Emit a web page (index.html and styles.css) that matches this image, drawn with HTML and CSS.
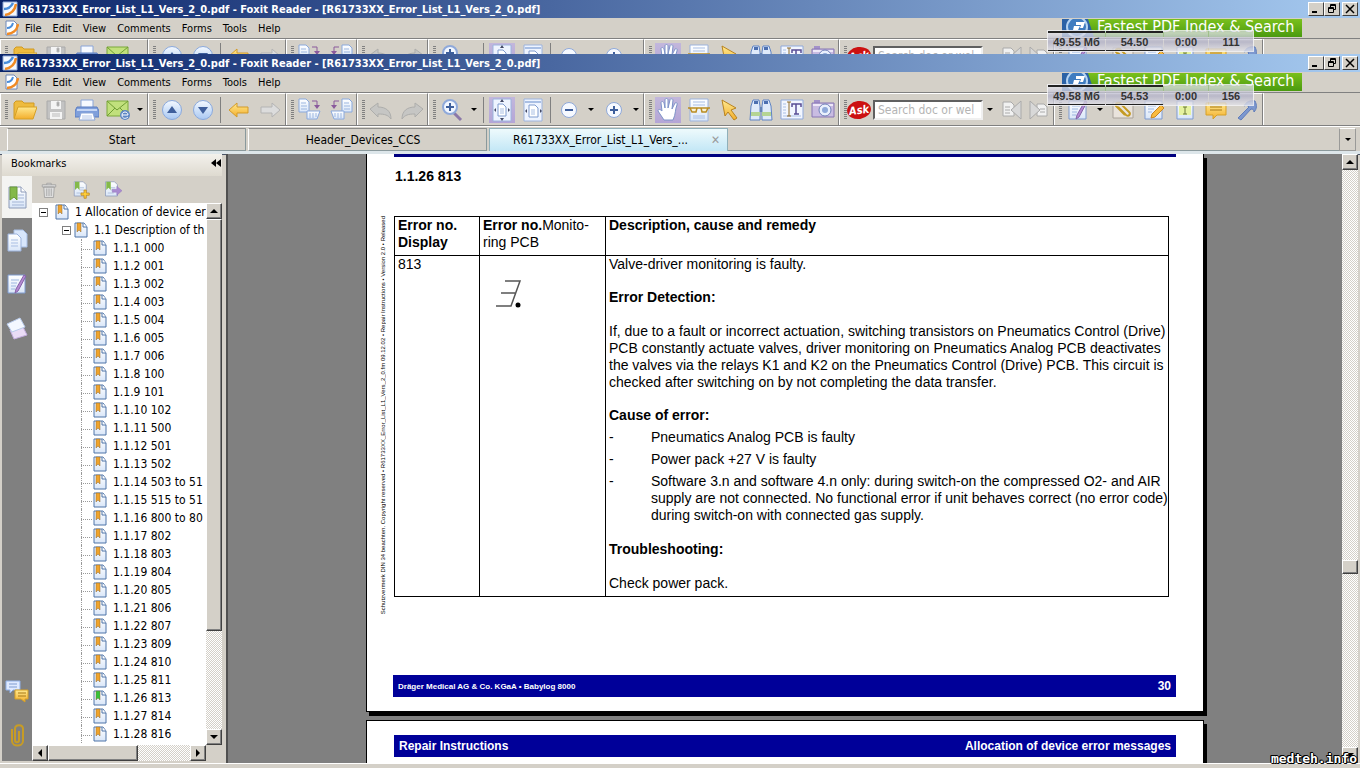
FILE: index.html
```html
<!DOCTYPE html>
<html lang="en">
<head>
    <meta charset="UTF-8">
    <meta name="viewport" content="width=device-width, initial-scale=1.0">
    <link rel="stylesheet" href="styles.css">
    <title>R61733XX_Error_List_L1_Vers_2_0.pdf - Foxit Reader</title>
</head>
<body>
    <svg class="sprites" aria-hidden="true">
        <defs>
            <linearGradient id="gold" x1="0" y1="0" x2="0" y2="1"><stop offset="0" stop-color="#ffe98f"/><stop offset="1" stop-color="#f3ae2c"/></linearGradient>
            <linearGradient id="blue" x1="0" y1="0" x2="0" y2="1"><stop offset="0" stop-color="#f4f9ff"/><stop offset="1" stop-color="#a9c8f2"/></linearGradient>
            <linearGradient id="paper" x1="0" y1="0" x2="0" y2="1"><stop offset="0" stop-color="#ffffff"/><stop offset="1" stop-color="#d9e6f8"/></linearGradient>
        </defs>
        <symbol id="logo" viewBox="0 0 16 16">
            <path d="M1 1h14v14H1z" fill="#f4f8ff" stroke="#8fa9d8"/>
            <path d="M2 8C6 8 9 6 11 2" fill="none" stroke="#4a8edb" stroke-width="2.5"/>
            <path d="M3 14C9 13 13 9 14 3" fill="none" stroke="#f08a24" stroke-width="2.5"/>
        </symbol>
        <symbol id="doclogo" viewBox="0 0 16 16">
            <path d="M3 1h8l3 3v11H3z" fill="#fff" stroke="#6f88b8"/>
            <path d="M4 8c3 0 5-1 6-5" fill="none" stroke="#4a8edb" stroke-width="2"/>
            <path d="M4 14c5 0 10-3 11-10" fill="none" stroke="#f08a24" stroke-width="2.5"/>
        </symbol>
        <symbol id="open" viewBox="0 0 24 24">
            <path d="M1 20V5l2-2h6l2 2h10v5" fill="#eebb3e" stroke="#d09a22"/>
            <path d="M1 21L5 9h19l-4 12z" fill="url(#gold)" stroke="#d6a026"/>
        </symbol>
        <symbol id="save" viewBox="0 0 24 24">
            <path d="M3 3h18v18H3z" fill="#c3c3c3" stroke="#aaa"/>
            <path d="M7 3h10v8H7zM6 14h12v7H6z" fill="#f4f4f4"/>
            <path d="M13 4h2v4h-2zM8 16h8M8 18h8" fill="#999" stroke="#bbb"/>
        </symbol>
        <symbol id="print" viewBox="0 0 24 24">
            <path d="M6 10V2h12v8" fill="#f6f9ff" stroke="#8aa5d8"/>
            <path d="M2 9h20l2 4v6H0v-6z" fill="#7f9fdb" stroke="#5b7cc0"/>
            <path d="M2 12h20" stroke="#c5d6f5" stroke-width="2"/>
            <path d="M6 15h12l2 7H4z" fill="#fff" stroke="#8aa5d8"/>
            <path d="M7 18h10M7 20h10" stroke="#b5c7e8"/>
        </symbol>
        <symbol id="mail" viewBox="0 0 24 24">
            <path d="M1 3h21v15H1z" fill="#c1e07c" stroke="#7aa83a"/>
            <path d="M1 3l10 9L22 3M1 18l8-8M22 18l-8-8" fill="none" stroke="#6f9c33"/>
            <circle cx="19" cy="17" r="5" fill="#5c86c4"/>
            <path d="M16 17h6c0-4-6-4-6 0s4 4 6 2" fill="none" stroke="#fff"/>
        </symbol>
        <symbol id="up" viewBox="0 0 24 24">
            <circle cx="12" cy="12" r="9.5" fill="url(#blue)" stroke="#8aa9dd"/>
            <path d="M12 8l5 7H7z" fill="#3f5f9c"/>
        </symbol>
        <symbol id="down" viewBox="0 0 24 24">
            <circle cx="12" cy="12" r="9.5" fill="url(#blue)" stroke="#8aa9dd"/>
            <path d="M12 16l5-7H7z" fill="#3f5f9c"/>
        </symbol>
        <symbol id="back" viewBox="0 0 24 24">
            <path d="M2 12l8-7v4h11v6H10v4z" fill="url(#gold)" stroke="#d39b2a"/>
        </symbol>
        <symbol id="forward" viewBox="0 0 24 24">
            <path d="M22 12l-8-7v4H3v6h11v4z" fill="#dcdcdc" stroke="#b4b4b4"/>
        </symbol>
        <symbol id="rotr" viewBox="0 0 24 24">
            <path d="M1 1h7l3 3v10H1z" fill="url(#paper)" stroke="#8aa9dd"/>
            <path d="M3 5h5M3 8h6M3 11h6" stroke="#9db7e0"/>
            <path d="M9 13h13l-3 8H9z" fill="url(#paper)" stroke="#8aa9dd"/>
            <path d="M12 15v5M15 15v5M18 15v4" stroke="#9db7e0"/>
            <path d="M14 3h5v6" fill="none" stroke="#8a5a9c"/><path d="M16 7l3 4 3-4z" fill="#8a5a9c"/>
        </symbol>
        <symbol id="rotl" viewBox="0 0 24 24">
            <path d="M13 1h7l3 3v10H13z" fill="url(#paper)" stroke="#8aa9dd"/>
            <path d="M15 5h5M15 8h6M15 11h6" stroke="#9db7e0"/>
            <path d="M2 13h13v8H5z" fill="url(#paper)" stroke="#8aa9dd"/>
            <path d="M6 15v4M9 15v5M12 15v5" stroke="#9db7e0"/>
            <path d="M10 3H5v6" fill="none" stroke="#8a5a9c"/><path d="M8 7l-3 4-3-4z" fill="#8a5a9c"/>
        </symbol>
        <symbol id="undo" viewBox="0 0 24 24">
            <path d="M1 11l8-6v4c8 0 13 4 13 12-3-4-6-5-13-5v3z" fill="#c6c6c4" stroke="#adadab"/>
        </symbol>
        <symbol id="redo" viewBox="0 0 24 24">
            <path d="M23 11l-8-6v4C7 9 2 13 2 21c3-4 6-5 13-5v3z" fill="#c6c6c4" stroke="#adadab"/>
        </symbol>
        <symbol id="zoomin" viewBox="0 0 24 24">
            <path d="M14 15l7 7" stroke="#8b78a8" stroke-width="3"/>
            <circle cx="10" cy="9" r="7" fill="#f1f6ff" stroke="#8fa9da" stroke-width="2"/>
            <path d="M10 5v8M6 9h8" stroke="#3e5f9c" stroke-width="2"/>
        </symbol>
        <symbol id="fitpage" viewBox="0 0 24 24">
            <path d="M3 1h18v22H3z" fill="#eef4ff" stroke="#9cb3dd"/>
            <path d="M8 6h5l3 3v9H8z" fill="#fff" stroke="#7f9bcf"/>
            <path d="M12 1l2 3h-4zM12 23l2-3h-4zM4 12l2-2v4zM20 12l-2-2v4z" fill="#444a66"/>
            <path d="M10 11h4M10 13h4M10 15h4" stroke="#a9bfe4"/>
        </symbol>
        <symbol id="fitwidth" viewBox="0 0 24 24">
            <path d="M3 1h18v22H3z" fill="#eef4ff" stroke="#9cb3dd"/>
            <path d="M4 4h16" stroke="#a9bfe4" stroke-width="2"/>
            <path d="M8 7h6l3 3v9H8z" fill="#fff" stroke="#7f9bcf"/>
            <path d="M4 13l2-2v4zM21 13l-2-2v4z" fill="#444a66"/>
            <path d="M10 12h4M10 14h4M10 16h4" stroke="#a9bfe4"/>
        </symbol>
        <symbol id="minus" viewBox="0 0 24 24">
            <circle cx="12" cy="12" r="7.5" fill="#f6f9ff" stroke="#8fa9da"/>
            <path d="M8 12h8" stroke="#3e5f9c" stroke-width="2"/>
        </symbol>
        <symbol id="plus" viewBox="0 0 24 24">
            <circle cx="12" cy="12" r="7.5" fill="#f6f9ff" stroke="#8fa9da"/>
            <path d="M8 12h8M12 8v8" stroke="#3e5f9c" stroke-width="2"/>
        </symbol>
        <symbol id="hand" viewBox="0 0 24 24">
            <path d="M8 22L2 13c0-2 2-2 4 0L5 5c0-2 2-2 3 0l1 5V2c0-2 3-2 3 0v8l2-8c0-2 3-1 3 0l-1 9 3-6c1-1 3 0 2 2-2 4-1 9-4 15z" fill="#fff" stroke="#7d93c8"/>
        </symbol>
        <symbol id="glasses" viewBox="0 0 24 24">
            <path d="M3 1h18v22H3z" fill="url(#paper)" stroke="#9cb3dd"/>
            <path d="M6 4h12M6 7h12M6 18h12M6 20h12" stroke="#a9bfe4"/>
            <path d="M1 10h22M3 10h7l-1 4H5zM14 10h7l-2 4h-4z" fill="#f8f2d8" stroke="#b98c22" stroke-width="1.5"/>
        </symbol>
        <symbol id="cursor" viewBox="0 0 24 24">
            <path d="M4 2l14 8-5 2 6 8-3 2-6-8-3 4z" fill="url(#gold)" stroke="#b88320"/>
        </symbol>
        <symbol id="find" viewBox="0 0 24 24">
            <path d="M4 2h6l1 6v14H1l1-14zM14 2h6l2 6 1 14H13V8z" fill="#dfeafa" stroke="#5e83c4"/>
            <path d="M5 3h4v3H5zM15 3h4v3h-4z" fill="#4c6fb0"/>
            <path d="M2 14h9v4H2zM13 14h9v4h-9z" fill="#b5d494"/>
            <path d="M11 9h2v5h-2z" fill="#6583b4"/>
        </symbol>
        <symbol id="text" viewBox="0 0 24 24">
            <path d="M1 2h22v19H1z" fill="#f2f6ff" stroke="#8fa9da"/>
            <path d="M3 6h3M3 9h3M3 12h3M3 15h3M3 18h18" stroke="#a9bfe4"/>
            <path d="M9 4v14M7 4h4M7 18h4" stroke="#8d6b28"/>
            <path d="M12 9V6h9v3M16 6v10M14 16h5" fill="none" stroke="#584d95" stroke-width="1.5"/>
        </symbol>
        <symbol id="camera" viewBox="0 0 24 24">
            <path d="M3 2h6v4H3z" fill="#a391c9"/>
            <path d="M1 5h22v14H1z" fill="#c9bce2" stroke="#8876b4"/>
            <path d="M2 7h20" stroke="#eee8f8" stroke-width="2"/>
            <circle cx="14" cy="12" r="6" fill="#e9f0fc" stroke="#7281b8"/>
            <circle cx="14" cy="12" r="3" fill="#8fa9da"/>
        </symbol>
        <symbol id="prevfind" viewBox="0 0 24 24">
            <path d="M4 4h8l3 3v11H4z" fill="#f1f1f1" stroke="#aaa"/>
            <path d="M6 9h5M6 12h5M6 15h5" stroke="#aaa"/>
            <path d="M22 3v18L12 12z" fill="#d8d8d8" stroke="#aaa"/>
        </symbol>
        <symbol id="nextfind" viewBox="0 0 24 24">
            <path d="M10 6h7l3 3v9H10z" fill="#f1f1f1" stroke="#aaa"/>
            <path d="M13 11h5M13 14h5" stroke="#aaa"/>
            <path d="M3 3v18l10-9z" fill="#d8d8d8" stroke="#aaa"/>
        </symbol>
        <symbol id="note" viewBox="0 0 24 24">
            <path d="M3 3h17v18H3z" fill="url(#paper)" stroke="#7f9bcf"/>
            <path d="M6 8h8M6 11h6M6 14h5M6 17h4" stroke="#9db7e0"/>
            <path d="M21 4L13 19l-3 2 1-4 8-14z" fill="#b48ad2" stroke="#8462a8"/>
        </symbol>
        <symbol id="attach" viewBox="0 0 24 24">
            <path d="M2 4h20v16H2z" fill="#e9e3dc" stroke="#a9a29a"/>
            <path d="M7 9l8 8c3 2 5-1 3-3L9 5C6 4 4 6 5 8l9 9" fill="none" stroke="#c49a22" stroke-width="2"/>
        </symbol>
        <symbol id="edit" viewBox="0 0 24 24">
            <path d="M3 3h17v18H3z" fill="url(#paper)" stroke="#7f9bcf"/>
            <path d="M6 8h8M6 11h6M6 14h4" stroke="#9db7e0"/>
            <path d="M19 7l3 3-9 9-4 1 1-4z" fill="#f9bb3f" stroke="#c98520"/>
        </symbol>
        <symbol id="type" viewBox="0 0 24 24">
            <path d="M4 3h16v18H4z" fill="url(#paper)" stroke="#7f9bcf"/>
            <path d="M6 8h12v9H6z" fill="#e6f3a0"/>
            <path d="M10 9h4M12 9v7M10 16h4" stroke="#6b7a3a"/>
        </symbol>
        <symbol id="comment" viewBox="0 0 24 24">
            <path d="M2 5h20v12h-9l-4 4v-4H2z" fill="url(#gold)" stroke="#d6a026"/>
            <path d="M6 9h12M6 12h12" stroke="#a87a18"/>
        </symbol>
        <symbol id="arrow" viewBox="0 0 24 24">
            <path d="M3 20L14 9c-2-2-3-2-5-1 2-4 6-6 11-5 2 4 2 8-1 11 0-2-1-3-3-3L6 22z" fill="#7d98cf" stroke="#5f7cba"/>
        </symbol>
        <symbol id="bm" viewBox="0 0 14 16">
            <path d="M1 1h9l3 4v10H1z" fill="url(#paper)" stroke="#4f74a8"/>
            <path d="M9 1v4h4" fill="#fff" stroke="#4f74a8"/>
            <path d="M3 1h4v9L5 8l-2 2z" fill="currentColor" stroke="#8a6a3a" stroke-width=".5"/>
        </symbol>
        <symbol id="navbm" viewBox="0 0 24 24">
            <path d="M4 2h12l5 5v16H4z" fill="url(#paper)" stroke="#8c9ab8"/>
            <path d="M16 2v5h5" fill="#fff" stroke="#8c9ab8"/>
            <path d="M13 10h6M13 13h6M7 17h12M7 20h12" stroke="#a3b5d6"/>
            <path d="M5 2h7v13l-3-3-4 3z" fill="#84b94a" stroke="#6a9a38"/>
        </symbol>
        <symbol id="pages" viewBox="0 0 24 24">
            <path d="M9 2h9l4 4v13H9z" fill="#d8e6fb" stroke="#a9bfe4"/>
            <path d="M3 6h9l4 4v13H3z" fill="url(#paper)" stroke="#9cb3dd"/>
            <path d="M6 12h7M6 15h7M6 18h7" stroke="#a9bfe4"/>
        </symbol>
        <symbol id="layers" viewBox="0 0 24 24">
            <path d="M5 14l13-3 4 8-13 4z" fill="#eadcf6" stroke="#c5aee0"/>
            <path d="M2 8l13-6 5 9-13 5z" fill="#f4f8ff" stroke="#b9cbea"/>
        </symbol>
        <symbol id="clip" viewBox="0 0 24 24">
            <path d="M14 8v9c0 3-4 3-4 0V6c0-5 8-5 8 0v12c0 6-11 6-11 0V6" fill="none" stroke="#c79c25" stroke-width="2"/>
        </symbol>
        <symbol id="talk" viewBox="0 0 24 24">
            <path d="M1 2h14v9H8l-3 3v-3H1z" fill="#dfeaff" stroke="#8fb0e8"/>
            <path d="M4 5h8M4 8h8" stroke="#7f9bcf"/>
            <path d="M10 11h13v9h-3v3l-4-3h-6z" fill="url(#gold)" stroke="#d6a026"/>
            <path d="M13 14h8M13 17h8" stroke="#a87a18"/>
        </symbol>
        <symbol id="trash" viewBox="0 0 24 24">
            <path d="M5 8h14l-1 14H6zM3 5h18v3H3zM9 5V3h6v2" fill="#dedede" stroke="#999"/>
            <path d="M9 10v10M12 10v10M15 10v10" stroke="#999"/>
        </symbol>
        <symbol id="addbm" viewBox="0 0 24 24">
            <path d="M3 1h12l4 4v15H3z" fill="url(#paper)" stroke="#8c9ab8"/>
            <path d="M10 9h6M10 12h6M6 16h8" stroke="#a3b5d6"/>
            <path d="M4 1h6v11l-3-3-3 3z" fill="#84b94a"/>
            <path d="M16 12h3v4h4v3h-4v4h-3v-4h-4v-3h4z" fill="#ffcf3a" stroke="#b88320"/>
        </symbol>
        <symbol id="gobm" viewBox="0 0 24 24">
            <path d="M2 1h12l4 4v15H2z" fill="url(#paper)" stroke="#8c9ab8"/>
            <path d="M9 9h6M9 12h3M5 16h8" stroke="#a3b5d6"/>
            <path d="M3 1h6v11L6 9l-3 3z" fill="#84b94a"/>
            <path d="M11 11h6V7l7 6-7 6v-4h-6z" fill="#a98bd0" stroke="#8a6cb4" stroke-width=".5"/>
        </symbol>
    </svg>

    <div class="window">
        <header class="window-head" id="head">
            <div class="titlebar">
                <svg class="ico16"><use href="#logo"/></svg>
                <span class="title">R61733XX_Error_List_L1_Vers_2_0.pdf - Foxit Reader - [R61733XX_Error_List_L1_Vers_2_0.pdf]</span>
                <button class="winbtn" aria-label="Minimize"><svg viewBox="0 0 12 10"><path d="M2 8h5" stroke="#000" stroke-width="2"/></svg></button>
                <button class="winbtn" aria-label="Restore"><svg viewBox="0 0 12 10"><path d="M4.500 3V.5h5v5H8M4.500 1.500h5M2.500 3.500h5v5h-5zM2.500 4.500h5" fill="none" stroke="#000"/></svg></button>
                <button class="winbtn" aria-label="Close"><svg viewBox="0 0 12 10"><path d="M2 1l8 8M10 1L2 9" stroke="#000" stroke-width="1.5"/></svg></button>
            </div>
            <nav class="menubar">
                <svg class="ico16"><use href="#doclogo"/></svg>
                <button>File</button>
                <button>Edit</button>
                <button>View</button>
                <button>Comments</button>
                <button>Forms</button>
                <button>Tools</button>
                <button>Help</button>
                <a class="promo" href="#">
                    <svg viewBox="0 0 32 18"><path d="M0 0h26l6 18H0z" fill="#2b62a6"/><circle cx="15" cy="8" r="10" fill="#3f7cc0" stroke="#b6d4f2" stroke-width="2"/><path d="M14 3h9l-2 6h-3l1-3h-5zM12 7h6l-2 4h-5z" fill="#fff"/></svg>
                    <span>Fastest PDF Index &amp; Search</span>
                </a>
            </nav>
            <div class="toolbar">
                <div class="group">
                    <button class="tool" aria-label="Open"><svg><use href="#open"/></svg></button>
                    <button class="tool" aria-label="Save"><svg><use href="#save"/></svg></button>
                    <button class="tool" aria-label="Print"><svg><use href="#print"/></svg></button>
                    <button class="tool" aria-label="Email"><svg><use href="#mail"/></svg></button>
                    <button class="drop" aria-label="More"></button>
                </div>
                <div class="group">
                    <button class="tool" aria-label="Previous page"><svg><use href="#up"/></svg></button>
                    <button class="tool" aria-label="Next page"><svg><use href="#down"/></svg></button>
                    <i class="sep"></i>
                    <button class="tool" aria-label="Back"><svg><use href="#back"/></svg></button>
                    <button class="tool" aria-label="Forward"><svg><use href="#forward"/></svg></button>
                </div>
                <div class="group">
                    <button class="tool" aria-label="Rotate right"><svg><use href="#rotr"/></svg></button>
                    <button class="tool" aria-label="Rotate left"><svg><use href="#rotl"/></svg></button>
                </div>
                <div class="group">
                    <button class="tool" aria-label="Undo"><svg><use href="#undo"/></svg></button>
                    <button class="tool" aria-label="Redo"><svg><use href="#redo"/></svg></button>
                </div>
                <div class="group">
                    <button class="tool" aria-label="Zoom"><svg><use href="#zoomin"/></svg></button>
                    <button class="drop" aria-label="Zoom options"></button>
                    <i class="sep"></i>
                    <button class="tool active" aria-label="Fit page"><svg><use href="#fitpage"/></svg></button>
                    <button class="tool" aria-label="Fit width"><svg><use href="#fitwidth"/></svg></button>
                    <i class="sep"></i>
                    <button class="tool" aria-label="Zoom out"><svg><use href="#minus"/></svg></button>
                    <button class="drop" aria-label="Zoom out options"></button>
                    <button class="tool" aria-label="Zoom in"><svg><use href="#plus"/></svg></button>
                    <button class="drop" aria-label="Zoom in options"></button>
                </div>
                <div class="group">
                    <button class="tool active" aria-label="Hand"><svg><use href="#hand"/></svg></button>
                    <button class="tool" aria-label="Read mode"><svg><use href="#glasses"/></svg></button>
                    <button class="tool" aria-label="Select annotation"><svg><use href="#cursor"/></svg></button>
                    <button class="tool" aria-label="Find"><svg><use href="#find"/></svg></button>
                    <button class="tool" aria-label="Select text"><svg><use href="#text"/></svg></button>
                    <button class="tool" aria-label="Snapshot"><svg><use href="#camera"/></svg></button>
                </div>
                <div class="group">
                    <button class="ask">Ask</button>
                    <input class="search" type="text" placeholder="Search doc or wel" aria-label="Search">
                    <button class="drop" aria-label="Search options"></button>
                    <button class="tool narrow" aria-label="Find previous"><svg><use href="#prevfind"/></svg></button>
                    <button class="tool narrow" aria-label="Find next"><svg><use href="#nextfind"/></svg></button>
                </div>
                <div class="group">
                    <button class="tool" aria-label="Note"><svg><use href="#note"/></svg></button>
                    <button class="drop" aria-label="Note options"></button>
                    <button class="tool" aria-label="Attach"><svg><use href="#attach"/></svg></button>
                    <button class="tool" aria-label="Edit"><svg><use href="#edit"/></svg></button>
                    <button class="tool" aria-label="Typewriter"><svg><use href="#type"/></svg></button>
                    <button class="tool" aria-label="Comment"><svg><use href="#comment"/></svg></button>
                    <button class="tool" aria-label="Arrow"><svg><use href="#arrow"/></svg></button>
                </div>
            </div>
            <div class="meter">
                <span class="bar" data-size>49.58 Мб</span>
                <span class="bar" data-rate>54.53</span>
                <span>0:00</span>
                <span data-count>156</span>
            </div>
        </header>

        <div class="tabs">
            <button class="tab">Start</button>
            <button class="tab">Header_Devices_CCS</button>
            <button class="tab current">R61733XX_Error_List_L1_Vers_... <span class="close">✕</span></button>
            <div class="tabfill"></div>
            <button class="tablist" aria-label="List tabs"></button>
        </div>

        <main class="content">
            <aside class="sidebar">
                <div class="side-title"><span>Bookmarks</span><button aria-label="Collapse"><svg viewBox="0 0 10 8"><path d="M5 0v8L0 4zM10 0v8L5 4z"/></svg></button></div>
                <div class="side-body">
                    <div class="strip">
                        <button class="on" aria-label="Bookmarks"><svg><use href="#navbm"/></svg></button>
                        <button aria-label="Pages"><svg><use href="#pages"/></svg></button>
                        <button aria-label="Signatures"><svg><use href="#note"/></svg></button>
                        <button aria-label="Layers"><svg><use href="#layers"/></svg></button>
                        <button class="low" aria-label="Comments"><svg><use href="#talk"/></svg></button>
                        <button aria-label="Attachments"><svg><use href="#clip"/></svg></button>
                    </div>
                    <div class="panel">
                        <div class="panel-tools">
                            <button aria-label="Delete"><svg><use href="#trash"/></svg></button>
                            <button aria-label="Add"><svg><use href="#addbm"/></svg></button>
                            <button aria-label="Go to"><svg><use href="#gobm"/></svg></button>
                        </div>
                        <div class="treebox">
                            <div class="tree" id="tree">
                                <a class="node root" href="#"><i class="fold"></i><svg><use href="#bm"/></svg>1 Allocation of device er</a>
                                <a class="node sub" href="#"><i class="fold"></i><svg><use href="#bm"/></svg>1.1 Description of th</a>
                            </div>
                            <div class="vscroll">
                                <button class="sb up" aria-label="Scroll up"></button>
                                <div class="thumb"></div>
                                <button class="sb down" aria-label="Scroll down"></button>
                            </div>
                        </div>
                        <div class="hscroll">
                            <button class="sb left" aria-label="Scroll left"></button>
                            <div class="thumb"></div>
                            <button class="sb right" aria-label="Scroll right"></button>
                        </div>
                    </div>
                </div>
            </aside>

            <section class="viewer">
                <article class="page first">
                    <div class="rule"></div>
                    <h1>1.1.26 813</h1>
                    <div class="sheet">
                        <p class="copyright">Schutzvermerk DIN 34 beachten. Copyright reserved • R61733XX_Error_List_L1_Vers_2_0.fm 09.12.02 • Repair Instructions • Version 2.0 • Released</p>
                        <table>
                            <tr>
                                <th class="c1">Error no.<br>Display</th>
                                <th class="c2">Error no.<span>Monito-<br>ring PCB</span></th>
                                <th>Description, cause and remedy</th>
                            </tr>
                            <tr>
                                <td>813</td>
                                <td><svg class="segment" viewBox="0 0 28 30"><path d="M10 2h15L16 27H1M6 14h14" fill="none" stroke="#555" stroke-width="1.5"/><circle cx="23" cy="26" r="2.5"/></svg></td>
                                <td>
                                    <p>Valve-driver monitoring is faulty.</p>
                                    <h2>Error Detection:</h2>
                                    <p>If, due to a fault or incorrect actuation, switching transistors on Pneumatics Control (Drive)<br>
                                    PCB constantly actuate valves, driver monitoring on Pneumatics Analog PCB deactivates<br>
                                    the valves via the relays K1 and K2 on the Pneumatics Control (Drive) PCB. This circuit is<br>
                                    checked after switching on by not completing the data transfer.</p>
                                    <h2 class="tight">Cause of error:</h2>
                                    <ul>
                                        <li>Pneumatics Analog PCB is faulty</li>
                                        <li>Power pack +27 V is faulty</li>
                                        <li>Software 3.n and software 4.n only: during switch-on the compressed O2- and AIR<br>
                                        supply are not connected. No functional error if unit behaves correct (no error code)<br>
                                        during switch-on with connected gas supply.</li>
                                    </ul>
                                    <h2>Troubleshooting:</h2>
                                    <p>Check power pack.</p>
                                </td>
                            </tr>
                        </table>
                    </div>
                    <footer><small>Dräger Medical AG &amp; Co. KGaA • Babylog 8000</small><span>30</span></footer>
                </article>
                <article class="page">
                    <div class="band"><span>Repair Instructions</span><span>Allocation of device error messages</span></div>
                </article>
            </section>
            <div class="vscroll main-scroll">
                <button class="sb up" aria-label="Scroll up"></button>
                <div class="thumb"></div>
                <button class="sb down" aria-label="Scroll down"></button>
            </div>
        </main>
        <div class="status"></div>
    </div>
    <div class="watermark">medteh.info</div>

    <script>
        // Bookmarks of section 1.1
        const errors = ['000', '001', '002', '003', '004', '005', '006', '100', '101', '102', '500', '501', '502',
            '503 to 51', '515 to 51', '800 to 80', '802', '803', '804', '805', '806', '807', '809', '810',
            '811', '813', '814', '816'];
        const tree = document.getElementById('tree');
        errors.forEach((code, i) => {
            const link = document.createElement('a');
            link.href = '#';
            link.className = code === '813' ? 'node leaf here' : 'node leaf';
            link.innerHTML = '<svg><use href="#bm"/></svg>1.1.' + (i + 1) + ' ' + code;
            tree.appendChild(link);
        });

        // The window behind shows only the top of its head
        const head = document.getElementById('head');
        const behind = head.cloneNode(true);
        behind.removeAttribute('id');
        behind.classList.add('behind');
        behind.querySelector('[data-size]').textContent = '49.55 Мб';
        behind.querySelector('[data-rate]').textContent = '54.50';
        behind.querySelector('[data-count]').textContent = '111';
        head.before(behind);
    </script>
</body>
</html>
```
FILE: styles.css
```css
* {
    box-sizing: border-box;
}

body {
    margin: 0;
    height: 100vh;
    overflow: hidden;
    background: #d4d0c8;
    color: #000;
    font-family: "DejaVu Sans Condensed", "DejaVu Sans", sans-serif;
    font-size: 11px;
}

button {
    padding: 0;
    border: 0;
    background: none;
    color: inherit;
    font: inherit;
}

a {
    color: inherit;
    text-decoration: none;
}

svg {
    display: block;
    flex: none;
}

.sprites {
    position: absolute;
    width: 0;
    height: 0;
}

.ico16 {
    width: 16px;
    height: 16px;
}

.window {
    display: flex;
    flex-direction: column;
    height: 100vh;
}

/* title, menu and toolbar */
.window-head {
    position: relative;
    flex: none;
}

.window-head.behind {
    height: 54px;
    overflow: hidden;
}

.titlebar {
    display: flex;
    align-items: center;
    height: 18px;
    padding: 0 2px;
    background: linear-gradient(to right, #0a246a, #a6caf0);
    color: #fff;
    font-weight: bold;
}

.title {
    flex: 1;
    padding-left: 2px;
    white-space: nowrap;
}

.winbtn {
    width: 16px;
    height: 14px;
    background: #d4d0c8;
    border: 1px solid;
    border-color: #fff #404040 #404040 #fff;
}

.winbtn:last-child {
    margin-left: 2px;
}

.winbtn svg {
    width: 12px;
    height: 10px;
    margin: auto;
}

.menubar {
    display: flex;
    align-items: center;
    gap: 11px;
    height: 20px;
    padding-left: 3px;
}

.menubar .ico16 {
    margin-right: -5px;
}

.promo {
    display: flex;
    align-items: center;
    width: 240px;
    height: 18px;
    margin: 0 58px 0 auto;
    overflow: hidden;
    background: linear-gradient(#7ac01c, #4a9a10);
    color: #fff;
    font: 16px/16px "DejaVu Sans Condensed", sans-serif;
    white-space: nowrap;
}

.promo span {
    padding-bottom: 2px;
}

.promo svg {
    width: 32px;
    height: 18px;
    margin-right: 3px;
}

.toolbar {
    display: flex;
    height: 34px;
    border-top: 1px solid #808080;
    border-bottom: 1px solid #808080;
}

.group {
    position: relative;
    display: flex;
    align-items: center;
    padding-left: 8px;
    border-top: 1px solid #fff;
    border-left: 1px solid #fff;
    border-right: 1px solid #808080;
}

.group + .group {
    padding-left: 7px;
}

.group:last-child {
    box-shadow: 1px 0 #fff;
}

.group::before {
    content: "";
    position: absolute;
    left: 4px;
    top: 6px;
    width: 3px;
    height: 19px;
    background: repeating-linear-gradient(#808080 0 1px, #d4d0c8 1px 2px);
}

.tool {
    display: flex;
    align-items: center;
    justify-content: center;
    width: 31px;
    height: 28px;
}

.tool.narrow {
    width: 28px;
}

.tool svg {
    width: 24px;
    height: 24px;
}

.tool.active {
    background: linear-gradient(#c2b7dc, #b4a5d6) center / 26px 26px no-repeat;
}

.drop {
    width: 14px;
    height: 24px;
}

.drop::before,
.tablist::before {
    content: "";
    display: block;
    width: 0;
    margin: 0 auto;
    border: 3px solid transparent;
    border-top-color: #000;
    border-bottom: 0;
}

.sep {
    width: 1px;
    height: 26px;
    margin: 0 2px;
    background: #808080;
}

.ask {
    width: 24px;
    height: 18px;
    margin-right: 2px;
    border-radius: 50%;
    background: #cc1111;
    color: #fff;
    font: italic bold 11px "DejaVu Sans Condensed", sans-serif;
    transform: rotate(-8deg);
}

.search {
    width: 110px;
    height: 20px;
    padding: 0 3px;
    border: 2px solid;
    border-color: #606060 #f0f0f0 #f0f0f0 #606060;
    background: #fff;
    font: 12px "DejaVu Sans Condensed", sans-serif;
}

.search::placeholder {
    color: #b4b4b4;
}

.meter {
    position: absolute;
    top: 30px;
    right: 106px;
    display: flex;
    gap: 1px;
    background: rgba(212, 212, 220, 0.6);
    border: 1px solid rgba(255, 255, 255, 0.6);
    color: #333;
    font: bold 11px/18px "Liberation Sans", sans-serif;
    text-align: center;
}

.meter span {
    width: 44px;
    border-top: 2px solid transparent;
    background: linear-gradient(rgba(240, 240, 245, 0.4), rgba(160, 160, 190, 0.5) 50%, rgba(240, 240, 245, 0.4));
}

.meter .bar {
    width: 57px;
    border-top-color: #222;
    box-shadow: inset 0 -1px #222;
}

/* document tabs */
.tabs {
    display: flex;
    flex: none;
    height: 28px;
    padding: 1px 4px 0 7px;
    border-bottom: 3px solid #dde6ea;
    box-shadow: 0 1px #4a5568;
    border-top: 1px solid #fff;
    font-size: 12px;
}

.tab {
    position: relative;
    width: 239px;
    margin-right: 2px;
    padding-right: 9px;
    border: 1px solid #8a999c;
    border-left-color: #fff;
    border-top-color: #8a8a88;
    white-space: nowrap;
}

.tab.current {
    padding-right: 16px;
    border-color: #8fb0ba;
    border-bottom: 0;
    margin-right: 0;
    background: linear-gradient(#eefafc, #c3e7f6);
}

.close {
    position: absolute;
    right: 7px;
    color: #9a9a9a;
}

.tabfill {
    flex: 1;
    border-bottom: 1px solid #8a999c;
}

.tablist {
    width: 17px;
    border: 1px solid #9a9a98;
    border-top-color: #fff;
}

/* bookmarks */
.content {
    display: flex;
    flex: 1;
    min-height: 0;
}

.sidebar {
    display: flex;
    flex-direction: column;
    flex: none;
    width: 228px;
    padding: 0 4px 2px 2px;
    border-right: 2px solid #505050;
}

.side-title {
    display: flex;
    align-items: center;
    justify-content: space-between;
    height: 22px;
    padding: 0 1px 0 9px;
    background: linear-gradient(#f3f1ec, #dedad0);
}

.side-title span {
    padding-bottom: 4px;
}

.side-title svg {
    width: 10px;
    height: 8px;
    margin-bottom: 4px;
}

.side-body {
    display: flex;
    flex: 1;
    min-height: 0;
}

.strip {
    display: flex;
    flex-direction: column;
    width: 30px;
    padding-bottom: 4px;
    background: #808080;
}

.strip button {
    display: flex;
    align-items: center;
    justify-content: center;
    height: 44px;
}

.strip .on {
    height: 42px;
    background: #f4f4f2;
}

.strip .low {
    margin-top: auto;
}

.strip svg {
    width: 24px;
    height: 24px;
}

.panel {
    display: flex;
    flex-direction: column;
    flex: 1;
    min-width: 0;
}

.panel-tools {
    display: flex;
    gap: 14px;
    align-items: center;
    height: 27px;
    padding-left: 8px;
}

.panel-tools svg {
    width: 18px;
    height: 18px;
}

.treebox {
    display: flex;
    flex: 1;
    min-height: 0;
}

.tree {
    flex: 1;
    min-width: 0;
    overflow: hidden;
    background: #fff;
    font-size: 12px;
}

.node {
    position: relative;
    display: flex;
    align-items: center;
    height: 18px;
    white-space: nowrap;
}

.node svg {
    width: 14px;
    height: 16px;
    margin-right: 6px;
    color: #f0a42c;
}

.node.here svg {
    color: #35c43a;
}

.root {
    padding-left: 7px;
}

.sub {
    padding-left: 26px;
}

.leaf {
    padding-left: 61px;
}

.leaf::before {
    content: "";
    position: absolute;
    left: 49px;
    top: 0;
    width: 11px;
    height: 10px;
    border-bottom: 1px dotted #999;
}

.leaf::after {
    content: "";
    position: absolute;
    left: 49px;
    top: 0;
    height: 18px;
    border-left: 1px dotted #999;
}

.fold {
    flex: none;
    width: 9px;
    height: 9px;
    margin-right: 7px;
    border: 1px solid #808080;
    background: linear-gradient(#000, #000) center / 5px 1px no-repeat;
}

.sub .fold {
    margin-right: 3px;
    margin-left: 4px;
}

.sub {
    padding-left: 26px;
}

/* scroll bars */
.vscroll,
.hscroll {
    display: flex;
    background: repeating-conic-gradient(#fff 0 25%, #d4d0c8 0 50%) 0 0 / 2px 2px;
}

.vscroll {
    flex-direction: column;
    flex: none;
    width: 16px;
}

.hscroll {
    height: 16px;
    margin-right: 16px;
}

.sb,
.thumb {
    background: #d4d0c8;
    border: 1px solid;
    border-color: #fff #404040 #404040 #fff;
    box-shadow: inset -1px -1px #808080;
}

.sb {
    display: flex;
    align-items: center;
    justify-content: center;
    flex: none;
    width: 16px;
    height: 16px;
}

.sb::before {
    content: "";
    border: 4px solid transparent;
}

.sb.up::before {
    border-bottom-color: #000;
    border-top: 0;
}

.sb.down::before {
    border-top-color: #000;
    border-bottom: 0;
}

.sb.left::before {
    border-right-color: #000;
    border-left: 0;
}

.sb.right::before {
    border-left-color: #000;
    border-right: 0;
}

.sb.down {
    margin-top: auto;
}

.sb.right {
    margin-left: auto;
}

.treebox .thumb {
    height: 76%;
}

.hscroll .thumb {
    width: 52%;
}

.main-scroll {
    margin-right: 2px;
}

.main-scroll .thumb {
    height: 14px;
    margin-top: 390px;
}

/* document */
.viewer {
    flex: 1;
    min-width: 0;
    overflow: hidden;
    background: #808080;
    font-family: "Liberation Sans", Arial, sans-serif;
    font-size: 14px;
    line-height: 17px;
}

.page {
    width: 838px;
    margin: 0 auto 8px;
    padding: 14px 27px;
    border: 1px solid #000;
    background: #fff;
    box-shadow: 3px 4px #000;
}

.page.first {
    padding-top: 0;
    border-top: 0;
}

.rule {
    height: 3px;
    background: #000080;
}

.page h1 {
    margin: 11px 0 31px 1px;
    font-size: 14px;
    line-height: 17px;
}

.sheet {
    position: relative;
}

.copyright {
    position: absolute;
    left: -15px;
    top: 0;
    margin: 0;
    font-size: 6px;
    line-height: 8px;
    white-space: nowrap;
    writing-mode: vertical-rl;
    transform: rotate(180deg);
}

table {
    width: 775px;
    table-layout: fixed;
    border-collapse: collapse;
}

th,
td {
    padding: 0 3px 4px;
    border: 1px solid #000;
    text-align: left;
    vertical-align: top;
}

th span {
    font-weight: normal;
}

.c1 {
    width: 85px;
}

.c2 {
    width: 126px;
}

td p,
td h2 {
    margin: 0 0 17px;
    font-size: 14px;
    line-height: 17px;
    white-space: nowrap;
}

td p {
    margin-bottom: 16px;
}

td h2.tight {
    margin-bottom: 5px;
}

td p:last-child {
    margin-bottom: 0;
}

.segment {
    width: 28px;
    height: 30px;
    margin: 23px 0 0 12px;
}

ul {
    margin: 0 0 17px;
    padding: 0;
    list-style: none;
}

li {
    display: block;
    position: relative;
    margin-bottom: 5px;
    padding-left: 42px;
    white-space: nowrap;
}

li:last-child {
    margin-bottom: 0;
}

li::before {
    content: "-";
    position: absolute;
    left: 0;
}

.page footer,
.band {
    display: flex;
    align-items: center;
    justify-content: space-between;
    height: 22px;
    padding: 0 5px;
    background: #000099;
    color: #fff;
    font-size: 12px;
    font-weight: bold;
}

.page footer {
    margin: 78px 0 0 -1px;
}

.page footer small {
    font-size: 8px;
}

.status {
    flex: none;
    height: 5px;
    border-top: 1px solid #fff;
    background: #d4d0c8;
}

.watermark {
    position: absolute;
    right: 3px;
    bottom: 2px;
    color: #fff;
    font: bold 13px "DejaVu Sans Mono", monospace;
    text-shadow: 1px 0 #000, -1px 0 #000, 0 1px #000, 0 -1px #000, 1px 1px #000, -1px -1px #000;
}
```
